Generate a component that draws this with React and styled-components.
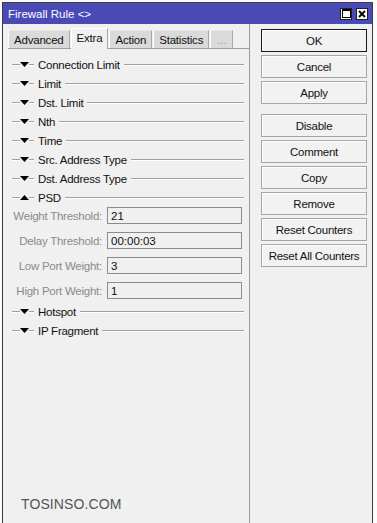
import React from 'react'
import styled, { createGlobalStyle } from 'styled-components'

const GlobalStyle = createGlobalStyle`
  html, body { margin: 0; padding: 0; background: #ffffff; }
  body { font-family: "Liberation Sans", Arial, sans-serif; }
  * { box-sizing: border-box; }
`

const Desktop = styled.div`
  width: 377px;
  height: 523px;
  overflow: hidden;
  background: #fbfbfb;
  padding: 2px 4px 0 2px;
`

const Window = styled.div`
  position: relative;
  height: 560px;
  border: 1px solid #3c3c3c;
  background: #f0f0f0;
  display: flex;
  flex-direction: column;
`

const TitleBar = styled.div`
  height: 21px;
  background: #4a4ab6;
  display: flex;
  align-items: center;
  padding: 0 4px 0 5px;
  color: #fff;
  font-size: 11.5px;
`

const TitleText = styled.div`
  flex: 1;
`

const TitleButton = styled.div`
  width: 12px;
  height: 12px;
  margin-left: 4px;
  background: #fff;
  border: 1px solid #222;
  display: flex;
  align-items: center;
  justify-content: center;
`

const Body = styled.div`
  flex: 1;
  display: flex;
`

const LeftPane = styled.div`
  width: 247px;
  padding: 4px 0 0 5px;
  border-right: 1px solid #9a9a9a;
  display: flex;
  flex-direction: column;
`

const Tabs = styled.div`
  display: flex;
  align-items: flex-end;
  height: 20px;
`

const Tab = styled.div`
  height: ${p => (p.active ? '21px' : '18px')};
  padding: 0 ${p => p.pad}px ${p => (p.active ? '3px' : '0')};
  display: flex;
  align-items: center;
  font-size: 11.5px;
  letter-spacing: -0.2px;
  color: ${p => (p.muted ? '#9a9a9a' : '#111')};
  background: ${p => (p.active ? '#f0f0f0' : '#dadada')};
  border-left: 1px solid #fff;
  border-right: 1px solid #a8a8a8;
  border-top: 1px solid ${p => (p.active ? '#fff' : '#e8e8e8')};
  margin-right: 1px;
  position: relative;
  z-index: ${p => (p.active ? 2 : 1)};
  margin-bottom: ${p => (p.active ? '-1px' : '0')};
`

const Panel = styled.div`
  flex: 1;
  border-top: 1px solid #a0a0a0;
  padding: 6px 5px 0 4px;
  display: flex;
  flex-direction: column;
`

const SectionRow = styled.div`
  height: 19px;
  display: flex;
  align-items: center;
  font-size: 11.5px;
  letter-spacing: -0.25px;
  color: #111;
  white-space: nowrap;
`

const Etch = styled.div`
  height: 2px;
  border-top: 1px solid #a0a0a0;
  border-bottom: 1px solid #fff;
  width: ${p => (p.w ? `${p.w}px` : 'auto')};
  flex: ${p => (p.w ? 'none' : 1)};
`

const SectionLabel = styled.span`
  padding: 0 4px;
`

const FieldGroup = styled.div`
  display: flex;
  flex-direction: column;
  margin: -4px 0 -1px;
`

const FieldRow = styled.div`
  height: 25px;
  display: flex;
  align-items: center;
`

const FieldLabel = styled.div`
  width: 95px;
  text-align: right;
  font-size: 11.5px;
  letter-spacing: -0.25px;
  white-space: nowrap;
  color: #8a8a8a;
  padding-right: 5px;
`

const Input = styled.div`
  width: 135px;
  height: 17px;
  border: 1px solid #8c8c8c;
  background: #f0f0f0;
  font-size: 11.5px;
  color: #111;
  padding-left: 3px;
  display: flex;
  align-items: center;
`

const RightPane = styled.div`
  flex: 1;
  padding: 5px 0 0 11px;
  display: flex;
  flex-direction: column;
  gap: 3px;
`

const Button = styled.div`
  width: 106px;
  height: 23px;
  border: 1px solid ${p => (p.primary ? '#1a1a1a' : '#a6a6a6')};
  background: #f2f2f2;
  box-shadow: inset 1px 1px 0 #fff;
  display: flex;
  align-items: center;
  justify-content: center;
  font-size: 11.5px;
  letter-spacing: -0.25px;
  white-space: nowrap;
  color: #111;
  margin-top: ${p => (p.spaced ? '7px' : '0')};
`

const Watermark = styled.div`
  position: absolute;
  left: 18px;
  top: 493px;
  font-size: 14px;
  color: #555;
  letter-spacing: 0.1px;
`

const Arrow = ({ up }) => (
  <svg width="9" height="5" viewBox="0 0 9 5">
    {up ? <polygon points="0,5 9,5 4.5,0" fill="#000" /> : <polygon points="0,0 9,0 4.5,5" fill="#000" />}
  </svg>
)

const Section = ({ label, up }) => (
  <SectionRow>
    <Etch w={8} />
    <Arrow up={up} />
    <Etch w={5} />
    <SectionLabel>{label}</SectionLabel>
    <Etch />
  </SectionRow>
)

const tabs = [
  { name: 'Advanced', pad: 5 },
  { name: 'Extra', pad: 5, active: true },
  { name: 'Action', pad: 5 },
  { name: 'Statistics', pad: 5 },
  { name: '...', pad: 6, muted: true },
]

const topSections = ['Connection Limit', 'Limit', 'Dst. Limit', 'Nth', 'Time', 'Src. Address Type', 'Dst. Address Type']

const psdFields = [
  ['Weight Threshold:', '21'],
  ['Delay Threshold:', '00:00:03'],
  ['Low Port Weight:', '3'],
  ['High Port Weight:', '1'],
]

const buttons = ['OK', 'Cancel', 'Apply', 'Disable', 'Comment', 'Copy', 'Remove', 'Reset Counters', 'Reset All Counters']

export default function App() {
  return (
    <>
      <GlobalStyle />
      <Desktop>
        <Window>
          <TitleBar>
            <TitleText>Firewall Rule &lt;&gt;</TitleText>
            <TitleButton>
              <svg width="9" height="9" viewBox="0 0 9 9">
                <rect x="0.5" y="0.5" width="8" height="8" fill="none" stroke="#000" />
                <line x1="0" y1="1.5" x2="9" y2="1.5" stroke="#000" />
              </svg>
            </TitleButton>
            <TitleButton>
              <svg width="8" height="8" viewBox="0 0 8 8">
                <path d="M1 1 L7 7 M7 1 L1 7" stroke="#000" strokeWidth="1.8" />
              </svg>
            </TitleButton>
          </TitleBar>
          <Body>
            <LeftPane>
              <Tabs>
                {tabs.map(t => (
                  <Tab key={t.name} active={t.active} pad={t.pad} muted={t.muted}>{t.name}</Tab>
                ))}
              </Tabs>
              <Panel>
                {topSections.map(s => <Section key={s} label={s} />)}
                <Section label="PSD" up />
                <FieldGroup>
                  {psdFields.map(([l, v]) => (
                    <FieldRow key={l}>
                      <FieldLabel>{l}</FieldLabel>
                      <Input>{v}</Input>
                    </FieldRow>
                  ))}
                </FieldGroup>
                <Section label="Hotspot" />
                <Section label="IP Fragment" />
              </Panel>
            </LeftPane>
            <RightPane>
              {buttons.map((b, i) => (
                <Button key={b} primary={i === 0} spaced={i === 3}>{b}</Button>
              ))}
            </RightPane>
          </Body>
          <Watermark>TOSINSO.COM</Watermark>
        </Window>
      </Desktop>
    </>
  )
}
